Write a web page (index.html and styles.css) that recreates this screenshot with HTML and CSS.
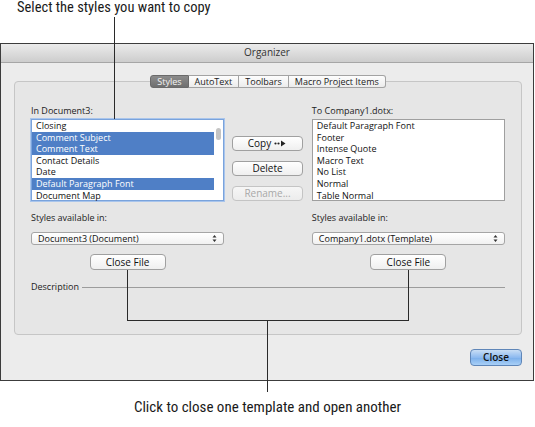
FILE: index.html
```html
<!DOCTYPE html>
<html>
<head>
<meta charset="utf-8">
<link rel="stylesheet" href="styles.css">
</head>
<body>
<div class="page">
  <div class="caption caption-top">Select the styles you want to copy</div>
  <div class="window">
    <div class="titlebar">Organizer</div>
    <div class="win-body">
      <div class="group">
        <div class="tabs">
          <span class="tab on">Styles</span><span class="tab">AutoText</span><span class="tab">Toolbars</span><span class="tab">Macro Project Items</span>
        </div>
        <div class="cols">
          <div class="col">
            <div class="label">In Document3:</div>
            <div class="list focus">
              <div class="rows">
                <div class="row">Closing</div>
                <div class="row sel">Comment Subject</div>
                <div class="row sel">Comment Text</div>
                <div class="row">Contact Details</div>
                <div class="row">Date</div>
                <div class="row sel">Default Paragraph Font</div>
                <div class="row">Document Map</div>
              </div>
              <div class="scroll"><div class="thumb"></div></div>
            </div>
            <div class="label label-avail">Styles available in:</div>
            <div class="popup"><span>Document3 (Document)</span>
              <svg class="arrows" width="5" height="9" viewBox="0 0 5 9"><path d="M0.5 3.5 L2.5 1 L4.5 3.5 Z M0.5 5.5 L2.5 8 L4.5 5.5 Z" fill="#333"/></svg>
            </div>
            <div class="btn-row"><button class="btn closefile">Close File</button></div>
          </div>
          <div class="mid">
            <button class="btn">Copy <svg class="copy-arrow" width="13" height="7" viewBox="0 0 13 7"><circle cx="1.5" cy="3.5" r="1.1" fill="#222"/><circle cx="4.5" cy="3.5" r="1.1" fill="#222"/><path d="M7 0.5 L11.5 3.5 L7 6.5 Z" fill="#222"/></svg></button>
            <button class="btn">Delete</button>
            <button class="btn disabled">Rename...</button>
          </div>
          <div class="col">
            <div class="label">To Company1.dotx:</div>
            <div class="list">
              <div class="rows">
                <div class="row">Default Paragraph Font</div>
                <div class="row">Footer</div>
                <div class="row">Intense Quote</div>
                <div class="row">Macro Text</div>
                <div class="row">No List</div>
                <div class="row">Normal</div>
                <div class="row">Table Normal</div>
              </div>
            </div>
            <div class="label label-avail">Styles available in:</div>
            <div class="popup"><span>Company1.dotx (Template)</span>
              <svg class="arrows" width="5" height="9" viewBox="0 0 5 9"><path d="M0.5 3.5 L2.5 1 L4.5 3.5 Z M0.5 5.5 L2.5 8 L4.5 5.5 Z" fill="#333"/></svg>
            </div>
            <div class="btn-row"><button class="btn closefile">Close File</button></div>
          </div>
        </div>
        <div class="desc"><span>Description</span><span class="rule"></span></div>
      </div>
      <div class="footer"><button class="btn primary">Close</button></div>
    </div>
  </div>
  <div class="caption caption-bottom">Click to close one template and open another</div>

  <div class="pointer v-top"></div>
  <div class="pointer v-left"></div>
  <div class="pointer v-right"></div>
  <div class="pointer h-bracket"></div>
  <div class="pointer v-center"></div>
</div>
</body>
</html>
```
FILE: styles.css
```css
* { box-sizing: border-box; }
html, body { margin: 0; padding: 0; background: #fff; }
body { font-family: "Open Sans", "DejaVu Sans", sans-serif; color: #1a1a1a; }
.page { position: relative; width: 535px; height: 427px; overflow: hidden; }

.caption {
  font-family: "Liberation Sans Narrow", "Roboto", "Liberation Sans", sans-serif;
  font-stretch: condensed;
  font-size: 15px;
  line-height: 16px;
  color: #1a1a1a;
}
.caption-top { height: 43px; padding: 0 0 0 17px; font-size: 14.5px; }
.caption-bottom { text-align: center; margin-top: 18px; }

.window {
  width: 534px;
  height: 338px;
  border: 1px solid #3c3c3c;
  background: #ececec;
}
.titlebar {
  height: 19px;
  background: linear-gradient(#ebebeb, #cdcdcd);
  border-bottom: 1px solid #a6a6a6;
  text-align: center;
  font-size: 10px;
  line-height: 17px;
  color: #333;
}
.win-body { padding: 18px 11px 0 13px; }

.group {
  width: 508px;
  height: 254px;
  border: 1px solid #c6c6c6;
  border-radius: 4px;
  background: #e6e6e6;
  padding: 0 16px;
}
.tabs {
  display: flex;
  justify-content: center;
  margin-top: -7px;
  height: 13px;
}
.tab {
  font-size: 9px;
  line-height: 11px;
  padding: 0 6px;
  border: 1px solid #a3a3a3;
  border-left: none;
  background: linear-gradient(#fdfdfd, #ececec);
  color: #222;
}
.tab:first-child { border-left: 1px solid #a3a3a3; border-radius: 3px 0 0 3px; }
.tab:last-child { border-radius: 0 3px 3px 0; }
.tab.on {
  background: linear-gradient(#8c8c8c, #6f6f6f);
  border-color: #6a6a6a;
  color: #f4f4f4;
}

.cols { display: flex; margin-top: 17px; }
.col { width: 194px; display: flex; flex-direction: column; }
.mid {
  width: 71px;
  margin: 31px 9px 0 8px;
  display: flex;
  flex-direction: column;
  gap: 10px;
}
.label { font-size: 9px; line-height: 12px; height: 12px; margin-bottom: 2px; color: #222; }
.label-avail { margin-top: 11px; margin-bottom: 8px; }

.list {
  height: 82px;
  background: #fff;
  border: 1px solid #9f9f9f;
  display: flex;
  padding: 0;
}
.list.focus {
  border-color: #7aa3dc;
  box-shadow: 0 0 0 1px #a9c5ec;
}
.rows { flex: 1; }
.row {
  height: 11.6px;
  font-size: 9px;
  line-height: 11.6px;
  padding-left: 4px;
  white-space: nowrap;
  color: #111;
}
.row.sel { background: #4f7fc6; color: #fff; }
.list.focus .rows { margin-right: 2px; }
.scroll { width: 7px; }
.thumb {
  margin-top: 8px;
  width: 5px;
  height: 12px;
  border-radius: 3px;
  background: #c4c4c4;
}

.popup {
  height: 13px;
  border: 1px solid #a5a5a5;
  border-radius: 3px;
  background: linear-gradient(#ffffff, #f1f1f1);
  display: flex;
  align-items: center;
  justify-content: space-between;
  padding: 0 6px 0 6px;
  font-size: 9px;
  line-height: 11px;
  color: #111;
}
.arrows { display: block; }

.btn-row { display: flex; justify-content: center; margin-top: 9px; }
.btn {
  font-family: "Open Sans", "DejaVu Sans", sans-serif;
  height: 15px;
  padding: 0;
  border: 1px solid #a0a0a0;
  border-radius: 4px;
  background: linear-gradient(#ffffff, #efefef);
  font-size: 10px;
  line-height: 13px;
  color: #111;
  display: flex;
  align-items: center;
  justify-content: center;
  gap: 3px;
}
.btn.disabled { color: #a8a8a8; border-color: #c4c4c4; background: linear-gradient(#f6f6f6, #ececec); }
.closefile { width: 76px; height: 16px; }
.copy-arrow { display: block; }

.desc {
  display: flex;
  align-items: center;
  margin-top: 11px;
  font-size: 9px;
  line-height: 12px;
  color: #222;
}
.desc .rule { flex: 1; height: 1px; background: #9c9c9c; margin-left: 3px; }

.footer { display: flex; justify-content: flex-end; margin-top: 14px; }
.btn.primary {
  width: 52px;
  height: 17px;
  border: 1px solid #5f86b8;
  background: linear-gradient(#c9def5, #8dbaf0 50%, #7aaeea 51%, #a9d0f7);
  font-weight: 600;
  color: #111;
}

.pointer { position: absolute; background: #2a2a2a; }
.v-top { left: 114px; top: 17px; width: 1px; height: 102px; }
.v-left { left: 127px; top: 270px; width: 1px; height: 51px; }
.v-right { left: 408px; top: 270px; width: 1px; height: 51px; }
.h-bracket { left: 127px; top: 320px; width: 282px; height: 1px; }
.v-center { left: 267px; top: 320px; width: 1px; height: 72px; }
```
